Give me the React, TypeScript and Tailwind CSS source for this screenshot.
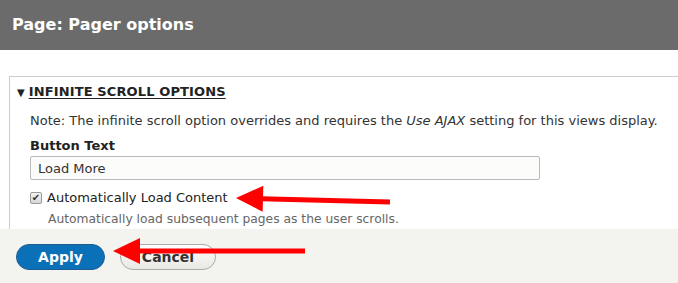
import React, { useState } from 'react';

const Arrow: React.FC<{ x1: number; y1: number; x2: number; y2: number }> = ({ x1, y1, x2, y2 }) => {
  // tip at (x1,y1), tail at (x2,y2)
  const head = 27;
  const half = 13;
  const dx = x2 - x1;
  const dy = y2 - y1;
  const len = Math.hypot(dx, dy);
  const ux = dx / len;
  const uy = dy / len;
  const bx = x1 + ux * head;
  const by = y1 + uy * head;
  const pts = `${x1},${y1} ${bx - uy * half},${by + ux * half} ${bx + uy * half},${by - ux * half}`;
  return (
    <g>
      <line x1={bx - ux * 2} y1={by - uy * 2} x2={x2} y2={y2} stroke="#ff0000" strokeWidth={5} />
      <polygon points={pts} fill="#ff0000" />
    </g>
  );
};

const App: React.FC = () => {
  const [text, setText] = useState('Load More');
  const [auto, setAuto] = useState(true);

  return (
    <div className="relative w-[678px] h-[283px] overflow-hidden bg-white font-['DejaVu_Sans',sans-serif] text-[#222]">
      {/* Title bar */}
      <div className="h-[50px] bg-[#6b6b6b] flex items-center px-3">
        <h1 className="text-white font-bold text-[16px]">Page: Pager options</h1>
      </div>

      {/* Body */}
      <div className="pt-[26px] pl-[9px] h-[179px] overflow-hidden">
        <fieldset className="border-t border-l border-[#ccc] pl-[20px] pt-[4px] pb-4 -mr-2">
          <div className="flex items-center -ml-[13px] h-[22px]">
            <span className="text-[10px] mr-[4px] text-[#222]">▼</span>
            <span className="font-bold text-[13px] underline underline-offset-2 tracking-[0.01em]">INFINITE SCROLL OPTIONS</span>
          </div>
          <p className="text-[13px] text-[#333] mt-[9px] leading-[18px]">
            Note: The infinite scroll option overrides and requires the <em>Use AJAX</em> setting for this views display.
          </p>
          <label className="block font-bold text-[13px] mt-[7px] leading-[18px]">Button Text</label>
          <input
            value={text}
            onChange={e => setText(e.target.value)}
            className="mt-[1px] w-[510px] h-[24px] px-[7px] bg-[#fcfcfa] border border-[#bbb] rounded-[2px] text-[13px] text-[#333] outline-none"
          />
          <label className="flex items-center mt-[10px] h-[16px] cursor-pointer">
            <input type="checkbox" checked={auto} onChange={e => setAuto(e.target.checked)} className="sr-only" />
            <span className="w-[12px] h-[12px] rounded-[2px] border border-[#999] bg-gradient-to-b from-[#f4f4f4] to-[#d8d8d8] flex items-center justify-center text-[10px] leading-none text-[#333]">
              {auto ? '✔' : ''}
            </span>
            <span className="ml-[5px] text-[13px] text-[#222]">Automatically Load Content</span>
          </label>
          <p className="ml-[18px] mt-[4px] text-[12.3px] text-[#666]">Automatically load subsequent pages as the user scrolls.</p>
        </fieldset>
      </div>

      {/* Footer */}
      <div className="h-[54px] bg-[#f3f3f0] flex items-start gap-[15px] pl-[16px] pt-[15px]">
        <button className="w-[89px] h-[26px] rounded-full bg-[#0a71b9] border border-[#1e5c90] text-white font-bold text-[14px]">Apply</button>
        <button className="w-[96px] h-[26px] rounded-full bg-gradient-to-b from-[#fefefe] to-[#e8e8e4] border border-[#aaa] text-[#333] font-bold text-[14px]">Cancel</button>
      </div>

      {/* Annotation arrows */}
      <svg className="absolute inset-0 pointer-events-none" width={678} height={283}>
        <Arrow x1={236} y1={198} x2={390} y2={202} />
        <Arrow x1={113} y1={251} x2={305} y2={251} />
      </svg>
    </div>
  );
};

export default App;
